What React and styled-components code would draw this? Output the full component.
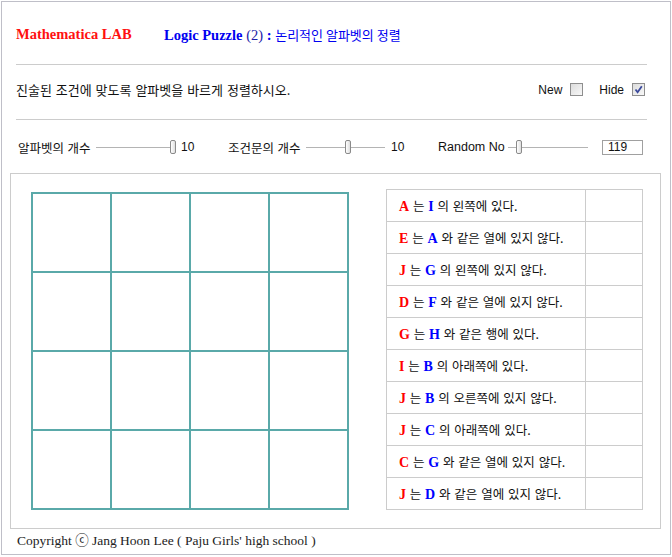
import React from 'react';
import styled, { createGlobalStyle } from 'styled-components';

const GlobalStyle = createGlobalStyle`
	html, body {
		margin: 0;
		padding: 0;
		background: #ffffff;
	}
	body {
		font-family: "Liberation Sans", "Noto Sans CJK KR", sans-serif;
		color: #111111;
	}
`;

const rules = [
	['A', 'I', '의 왼쪽에 있다.'],
	['E', 'A', '와 같은 열에 있지 않다.'],
	['J', 'G', '의 왼쪽에 있지 않다.'],
	['D', 'F', '와 같은 열에 있지 않다.'],
	['G', 'H', '와 같은 행에 있다.'],
	['I', 'B', '의 아래쪽에 있다.'],
	['J', 'B', '의 오른쪽에 있지 않다.'],
	['J', 'C', '의 아래쪽에 있다.'],
	['C', 'G', '와 같은 열에 있지 않다.'],
	['J', 'D', '와 같은 열에 있지 않다.'],
];

const Checkbox = ({ checked }) => (
	<Box>
		{checked && (
			<svg width="11" height="11" viewBox="0 0 11 11">
				<path d="M2.5 5.5 L4.6 8.2 L8.8 2.2" fill="none" stroke="#3b4a9c" strokeWidth="1.8" />
			</svg>
		)}
	</Box>
);

const Slider = ({ pos, width }) => (
	<Track $width={width}>
		<Line />
		<Thumb $pos={pos} />
	</Track>
);

const App = () => {
	return (
		<>
			<GlobalStyle />
			<Frame>
				<Header>
					<Brand>Mathematica LAB</Brand>
					<Title>
						<b>Logic Puzzle</b> <Paren>(2)</Paren> <b>:</b> <Hangul>논리적인 알파벳의 정렬</Hangul>
					</Title>
				</Header>
				<Rule />
				<Instruction>
					<Text>진술된 조건에 맞도록 알파벳을 바르게 정렬하시오.</Text>
					<Options>
						<Option>
							New <Checkbox />
						</Option>
						<Option>
							Hide <Checkbox checked />
						</Option>
					</Options>
				</Instruction>
				<Rule />
				<Controls>
					<Group>
						<Label>알파벳의 개수</Label>
						<Slider pos={74} width={79} />
						<Value>10</Value>
					</Group>
					<Group>
						<Label>조건문의 개수</Label>
						<Slider pos={39} width={79} />
						<Value>10</Value>
					</Group>
					<Group>
						<Label $width={70}>Random No</Label>
						<Slider pos={8} width={80} />
						<NumberBox>119</NumberBox>
					</Group>
				</Controls>
				<Panel>
					<Board>
						{Array.from({ length: 16 }).map((_, i) => (
							<Cell key={i} />
						))}
					</Board>
					<Statements>
						{rules.map(([a, b, rest], i) => (
							<Row key={i}>
								<Statement>
									<Letter $color="#ff0000">{a}</Letter> 는 <Letter $color="#0000ff">{b}</Letter> {rest}
								</Statement>
								<Answer />
							</Row>
						))}
					</Statements>
				</Panel>
				<Footer>Copyright ⓒ Jang Hoon Lee ( Paju Girls' high school )</Footer>
			</Frame>
		</>
	);
};

export default App;

const Frame = styled.div`
	box-sizing: border-box;
	margin: 1px 0 0 1px;
	width: 670px;
	height: 554px;
	border: 1px solid #bfbfc8;
	padding: 0 9px 0 8px;
	display: flex;
	flex-direction: column;
`;
const Header = styled.div`
	height: 62px;
	box-sizing: border-box;
	padding: 4px 0 0 6px;
	display: flex;
	align-items: center;
	font-family: "Liberation Serif", "Noto Sans CJK KR", serif;
	font-size: 14.5px;
`;
const Brand = styled.span`
	width: 148px;
	color: #ff1010;
	font-weight: 700;
`;
const Title = styled.span`
	color: #0000f0;
	b {
		font-weight: 700;
	}
`;
const Paren = styled.span`
	color: #1c1ca8;
`;
const Hangul = styled.span`
	font-family: "Noto Sans CJK KR", sans-serif;
	font-size: 13px;
`;
const Rule = styled.div`
	height: 1px;
	margin: 0 14px 0 6px;
	background: #cccccc;
`;
const Instruction = styled.div`
	height: 54px;
	box-sizing: border-box;
	padding: 0 16px 4px 6px;
	display: flex;
	align-items: center;
	justify-content: space-between;
`;
const Text = styled.span`
	font-family: "Noto Sans CJK KR", sans-serif;
	font-size: 13px;
	word-spacing: 1px;
`;
const Options = styled.div`
	display: flex;
	gap: 16px;
`;
const Option = styled.label`
	display: flex;
	align-items: center;
	gap: 8px;
	font-size: 12px;
`;
const Box = styled.span`
	box-sizing: border-box;
	width: 13px;
	height: 13px;
	border: 1px solid #8e8e8e;
	background: linear-gradient(135deg, #dcdcdc, #f8f8f8);
	display: flex;
	align-items: center;
	justify-content: center;
`;
const Controls = styled.div`
	height: 53px;
	padding: 2px 0 0 8px;
	box-sizing: border-box;
	display: flex;
	align-items: center;
	font-size: 12px;
`;
const Group = styled.div`
	width: 210px;
	display: flex;
	align-items: center;
	&:last-child {
		width: auto;
	}
`;
const Label = styled.span`
	width: ${(p) => p.$width || 78}px;
	font-family: "Liberation Sans", "Noto Sans CJK KR", sans-serif;
	font-size: 12.5px;
	white-space: nowrap;
`;
const Track = styled.div`
	position: relative;
	width: ${(p) => p.$width}px;
	height: 16px;
	display: flex;
	align-items: center;
`;
const Line = styled.div`
	width: 100%;
	height: 1px;
	background: #b4b4b4;
`;
const Thumb = styled.div`
	position: absolute;
	top: 1px;
	left: ${(p) => p.$pos}px;
	box-sizing: border-box;
	width: 6px;
	height: 14px;
	border: 1px solid #8a8a8a;
	border-radius: 2px;
	background: linear-gradient(90deg, #ffffff, #dedede);
`;
const Value = styled.span`
	margin-left: 6px;
`;
const NumberBox = styled.div`
	box-sizing: border-box;
	margin-left: 14px;
	width: 41px;
	height: 15px;
	border: 1px solid #a0a0a0;
	padding-left: 5px;
	font-size: 12px;
	line-height: 13px;
`;
const Panel = styled.div`
	box-sizing: border-box;
	height: 357px;
	border: 1px solid #cccccc;
	padding: 15px 0 0 20px;
	display: flex;
	align-items: flex-start;
`;
const Board = styled.div`
	margin-top: 3px;
	display: grid;
	grid-template-columns: repeat(4, 77px);
	grid-template-rows: repeat(4, 77px);
	gap: 2px;
	padding: 2px;
	background: #5aa9a9;
`;
const Cell = styled.div`
	background: #ffffff;
`;
const Statements = styled.div`
	margin-left: 37px;
	width: 257px;
	box-sizing: border-box;
	border: 1px solid #cccccc;
	border-bottom: none;
`;
const Row = styled.div`
	height: 32px;
	box-sizing: border-box;
	border-bottom: 1px solid #cccccc;
	display: grid;
	grid-template-columns: 1fr 57px;
`;
const Statement = styled.div`
	padding-left: 12px;
	line-height: 31px;
	font-family: "Noto Sans CJK KR", sans-serif;
	font-size: 12.5px;
	word-spacing: 1px;
	white-space: nowrap;
`;
const Letter = styled.span`
	font-family: "Liberation Serif", serif;
	font-weight: 700;
	font-size: 14px;
	color: ${(p) => p.$color};
`;
const Answer = styled.div`
	border-left: 1px solid #cccccc;
`;
const Footer = styled.div`
	flex: 1;
	padding: 0 0 5px 7px;
	display: flex;
	align-items: center;
	font-family: "Liberation Serif", "Noto Sans CJK KR", serif;
	font-size: 13.5px;
	color: #222222;
`;
